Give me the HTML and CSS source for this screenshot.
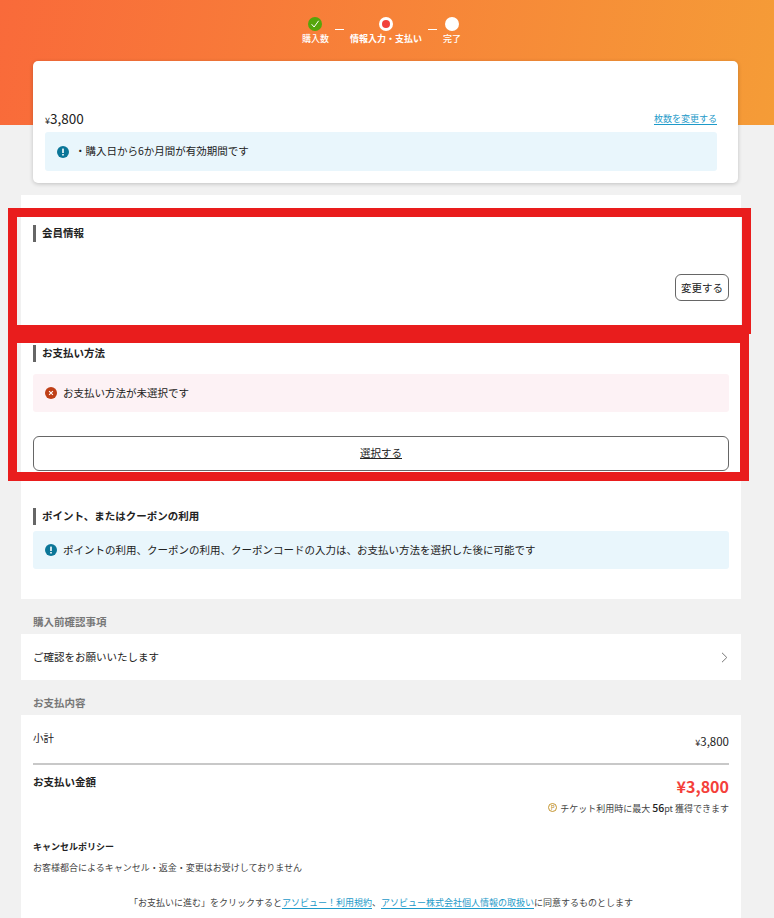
FILE: index.html
```html
<!DOCTYPE html>
<html lang="ja">
<head>
<meta charset="utf-8">
<title>お支払い</title>
<link rel="stylesheet" href="styles.css">
</head>
<body>
<div class="page">
  <header class="steps">
    <div class="step">
      <svg class="step-icon" viewBox="0 0 14 14"><circle cx="7" cy="7" r="7" fill="#55a50a"/><path d="M3.6 7.2 6.1 10 10.6 3.8" fill="none" stroke="#fff" stroke-width="1"/></svg>
      <span class="step-label">購入数</span>
    </div>
    <span class="step-dash"></span>
    <div class="step">
      <svg class="step-icon" viewBox="0 0 14 14"><circle cx="7" cy="7" r="7" fill="#fff"/><circle cx="7" cy="7" r="4" fill="#f2423c"/></svg>
      <span class="step-label step-label-current">情報入力・支払い</span>
    </div>
    <span class="step-dash"></span>
    <div class="step">
      <svg class="step-icon" viewBox="0 0 14 14"><circle cx="7" cy="7" r="7" fill="#fff"/></svg>
      <span class="step-label">完了</span>
    </div>
  </header>

  <section class="ticket-card">
    <div class="ticket-price-row">
      <span class="price"><span class="yen">¥</span>3,800</span>
      <a class="link change-count" href="#">枚数を変更する</a>
    </div>
    <div class="notice notice-info notice-tall">
      <svg class="notice-icon" viewBox="0 0 12 12"><circle cx="6" cy="6" r="6" fill="#0b7698"/><rect x="5.2" y="2.6" width="1.6" height="4.4" fill="#fff"/><rect x="5.2" y="8" width="1.6" height="1.5" fill="#fff"/></svg>
      <span class="notice-text">・購入日から6か月間が有効期間です</span>
    </div>
  </section>

  <main class="panel panel-main">
    <section class="member">
      <h2 class="heading">会員情報</h2>
      <div class="member-action"><button class="btn-small">変更する</button></div>
    </section>
    <section class="payment">
      <h2 class="heading">お支払い方法</h2>
      <div class="notice notice-error">
        <svg class="notice-icon" viewBox="0 0 12 12"><circle cx="6" cy="6" r="6" fill="#bf3f17"/><path d="M4.1 4.1 7.9 7.9M7.9 4.1 4.1 7.9" stroke="#fff" stroke-width="1.1"/></svg>
        <span class="notice-text">お支払い方法が未選択です</span>
      </div>
      <button class="btn-wide">選択する</button>
    </section>
    <section class="points">
      <h2 class="heading">ポイント、またはクーポンの利用</h2>
      <div class="notice notice-info">
        <svg class="notice-icon" viewBox="0 0 12 12"><circle cx="6" cy="6" r="6" fill="#0b7698"/><rect x="5.2" y="2.6" width="1.6" height="4.4" fill="#fff"/><rect x="5.2" y="8" width="1.6" height="1.5" fill="#fff"/></svg>
        <span class="notice-text">ポイントの利用、クーポンの利用、クーポンコードの入力は、お支払い方法を選択した後に可能です</span>
      </div>
    </section>
  </main>

  <h3 class="group-title">購入前確認事項</h3>
  <div class="panel confirm-row">
    <span class="confirm-text">ご確認をお願いいたします</span>
    <svg class="chevron" viewBox="0 0 7 11"><path d="M1 .8 5.8 5.5 1 10.2" fill="none" stroke="#777" stroke-width="1"/></svg>
  </div>

  <h3 class="group-title">お支払内容</h3>
  <section class="panel summary">
    <div class="subtotal">
      <span class="subtotal-label">小計</span>
      <span class="subtotal-price"><span class="yen">¥</span>3,800</span>
    </div>
    <div class="total">
      <span class="total-label">お支払い金額</span>
      <span class="total-price">¥3,800</span>
    </div>
    <div class="earn">
      <span class="earn-icon">P</span>
      <span>チケット利用時に最大 <b class="earn-num">56</b>pt 獲得できます</span>
    </div>
    <h4 class="policy-title">キャンセルポリシー</h4>
    <p class="policy-text">お客様都合によるキャンセル・返金・変更はお受けしておりません</p>
    <p class="terms">「お支払いに進む」をクリックすると<a class="link" href="#">アソビュー！利用規約</a>、<a class="link" href="#">アソビュー株式会社個人情報の取扱い</a>に同意するものとします</p>
  </section>

  <div class="mark mark-member"></div>
  <div class="mark mark-payment"></div>
</div>
</body>
</html>
```
FILE: styles.css
```css
* { box-sizing: border-box; }
html, body { margin: 0; height: 100%; }
body {
  overflow: hidden;
  font-family: "Noto Sans CJK JP", "Noto Sans", sans-serif;
  font-size: 10.5px;
  color: #222;
  background: #f1f1f1;
}
a { color: inherit; }
h2, h3, h4, p { margin: 0; }

.page {
  position: relative;
  height: 918px;
  padding: 16px 21px 0;
  background: linear-gradient(100deg, #f96a3a 0%, #f59c37 100%) no-repeat 0 0 / 100% 125px;
}

.steps {
  display: flex;
  justify-content: center;
  align-items: flex-start;
  height: 45px;
  margin-left: -11px;
}
.step { display: flex; flex-direction: column; align-items: center; }
.step-icon { width: 14px; height: 16px; display: block; }
.step-label { margin-top: 1px; font-size: 9px; line-height: 12px; font-weight: 500; color: #fff; }
.step-label-current { font-weight: 700; }
.step-dash { width: 9px; height: 1px; margin: 13px 6px 0; background: #fff; }

.ticket-card {
  width: 705px;
  height: 122px;
  margin-left: 12px;
  padding: 46px 21px 12px 12px;
  background: #fff;
  border-radius: 5px;
  box-shadow: 0 1px 4px rgba(0, 0, 0, .2);
}
.ticket-price-row {
  display: flex;
  justify-content: space-between;
  align-items: center;
  height: 25px;
}
.price { font-size: 13.5px; line-height: 22px; color: #222; }
.yen { font-size: 9px; }
.link { color: #1d9ac9; text-decoration: underline; text-underline-offset: 2px; }
.change-count { font-size: 9px; margin-top: -2px; }

.notice {
  display: flex;
  align-items: center;
  height: 38px;
  padding: 0 12px;
  border-radius: 3px;
}
.notice-tall { height: 39px; }
.notice-info { background: #e9f6fc; }
.notice-error { background: #fdf2f5; }
.notice-icon { flex: none; width: 12px; height: 14px; margin-right: 6px; }
.notice-text { padding-bottom: 2px; }

.panel { background: #fff; width: 720px; }
.panel-main { height: 404px; margin-top: 12px; padding: 30px 12px 0; }

.heading {
  height: 17px;
  padding-left: 6px;
  font-size: 10.5px;
  line-height: 16px;
  font-weight: 700;
  color: #222;
  border-left: 3px solid #666;
}

.member { height: 120px; }
.member-action { display: flex; justify-content: flex-end; margin-top: 32px; }
.btn-small {
  width: 54px;
  height: 27px;
  padding: 0 0 1px;
  font: inherit;
  color: #222;
  background: #fff;
  border: 1px solid #666;
  border-radius: 6px;
}

.payment .notice { margin-top: 12px; }
.btn-wide {
  display: block;
  width: 100%;
  height: 35px;
  margin-top: 24px;
  padding: 0 0 2px;
  font: inherit;
  color: #222;
  text-decoration: underline;
  background: #fff;
  border: 1px solid #666;
  border-radius: 6px;
}

.points { margin-top: 37px; }
.points .notice { margin-top: 6px; }

.group-title {
  height: 35px;
  padding: 16px 12px 0;
  font-size: 10.5px;
  line-height: 14px;
  font-weight: 700;
  color: #777;
}

.confirm-row {
  display: flex;
  justify-content: space-between;
  align-items: center;
  height: 46px;
  padding: 0 13px 0 12px;
}
.confirm-text { padding-bottom: 2px; }
.chevron { width: 7px; height: 11px; }

.summary { height: 203px; padding: 14px 12px 0; }
.subtotal { display: flex; justify-content: space-between; height: 36px; border-bottom: 2px solid #c8c8c8; }
.subtotal-label { line-height: 18px; }
.subtotal-price { font-size: 11.5px; line-height: 16px; padding-top: 4px; }

.total { display: flex; justify-content: space-between; margin-top: 8px; height: 26px; }
.total-label { font-size: 10.5px; font-weight: 700; line-height: 18px; }
.total-price { font-size: 16px; font-weight: 700; line-height: 26px; color: #f4403a; }

.earn {
  display: flex;
  justify-content: flex-end;
  align-items: center;
  gap: 3px;
  height: 14px;
  margin-top: 1px;
  font-size: 9px;
  color: #444;
}
.earn-icon {
  width: 9px;
  height: 9px;
  font-size: 6px;
  line-height: 8px;
  text-align: center;
  color: #b88a25;
  border: 1px solid #c4952f;
  border-radius: 50%;
}
.earn-num { font-size: 10.5px; font-weight: 500; color: #222; }

.policy-title { margin-top: 26px; font-size: 9px; line-height: 14px; font-weight: 700; color: #222; }
.policy-text { margin-top: 7px; font-size: 9px; line-height: 14px; color: #444; }
.terms { margin-top: 21px; font-size: 9px; line-height: 14px; text-align: center; color: #444; }

.mark { position: absolute; left: 8px; border: 9px solid #e91d1d; pointer-events: none; }
.mark-member { top: 208px; width: 743px; height: 126px; }
.mark-payment { top: 334px; width: 741px; height: 147px; }
```
